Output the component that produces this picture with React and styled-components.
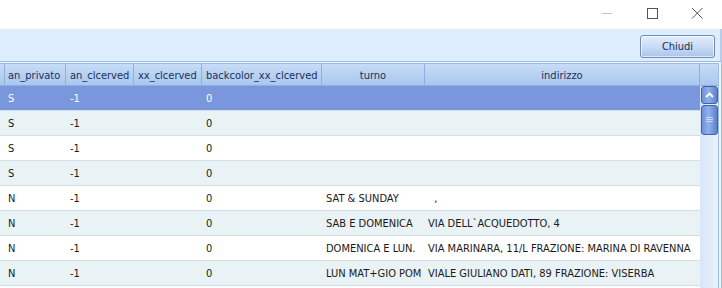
import React from "react";
import styled, { createGlobalStyle } from "styled-components";

const GlobalStyle = createGlobalStyle`
  html, body {
    margin: 0;
    padding: 0;
    background: #ffffff;
  }
  body {
    font-family: "DejaVu Sans Condensed", "DejaVu Sans", sans-serif;
    font-stretch: semi-condensed;
    font-size: 11px;
  }
`;

const COLUMNS = "4px 62px 68px 68px 120px 103px 275px";

const Window = styled.div`
  width: 722px;
  height: 288px;
  overflow: hidden;
  display: flex;
  flex-direction: column;
  background: #ffffff;
`;

const TitleBar = styled.div`
  height: 29px;
  flex-shrink: 0;
  display: flex;
  justify-content: flex-end;
  align-items: flex-start;
  padding-right: 3px;
`;

const CtrlButton = styled.div`
  width: 45px;
  height: 26px;
  display: flex;
  align-items: center;
  justify-content: center;
`;

const Toolbar = styled.div`
  height: 32px;
  flex-shrink: 0;
  display: flex;
  justify-content: flex-end;
  align-items: flex-start;
  padding: 6px 5px 0 0;
  box-sizing: border-box;
  background: #dfeefc;
  border-right: 2px solid #b7cde8;
`;

const CloseButton = styled.button`
  width: 75px;
  height: 23px;
  padding: 0;
  border: 1px solid #6f8db8;
  border-radius: 3px;
  background: linear-gradient(#e3eefb 0%, #c9dcf4 50%, #aac5eb 100%);
  box-shadow: inset 0 0 0 1px rgba(255, 255, 255, 0.6);
  font-family: inherit;
  font-size: 11px;
  color: #1b2b55;
`;

const GridFrame = styled.div`
  flex: 1;
  display: flex;
  flex-direction: column;
  border-top: 1px solid #9fbde4;
  border-right: 1px solid #9fbde4;
  padding-top: 1px;
  padding-right: 2px;
  background: #eef4fb;
  min-height: 0;
`;

const Grid = styled.div`
  flex: 1;
  display: flex;
  flex-direction: column;
  border-top: 1px solid #9fbde4;
  border-right: 1px solid #9fbde4;
  min-height: 0;
`;

const HeaderRow = styled.div`
  display: grid;
  grid-template-columns: ${COLUMNS} 1fr;
  height: 21px;
  flex-shrink: 0;
  background: linear-gradient(#c7dcf6, #a9c7ee);
  border-bottom: 1px solid #8fb0dc;
`;

const HeaderCell = styled.div`
  display: flex;
  align-items: center;
  justify-content: ${(p) => (p.$center ? "center" : "flex-start")};
  padding-left: ${(p) => (p.$center ? 0 : 4)}px;
  padding-top: 1px;
  border-right: ${(p) => (p.$last ? "none" : "1px solid #8fb0dc")};
  color: #1c2f5c;
  white-space: nowrap;
  overflow: hidden;
`;

const Body = styled.div`
  flex: 1;
  display: flex;
  min-height: 0;
`;

const Rows = styled.div`
  width: 700px;
  flex-shrink: 0;
  display: flex;
  flex-direction: column;
`;

const Row = styled.div`
  display: grid;
  grid-template-columns: ${COLUMNS};
  height: 24px;
  flex-shrink: 0;
  border-bottom: 1px solid #d2deea;
  background: ${(p) =>
    p.$selected ? "#7a97dd" : p.$alt ? "#e9f2f5" : "#ffffff"};
  color: ${(p) => (p.$selected ? "#ffffff" : "#1a1a1a")};
`;

const Cell = styled.div`
  display: flex;
  align-items: center;
  padding-left: ${(p) => p.$pad ?? 4}px;
  padding-top: 1px;
  white-space: pre;
  overflow: hidden;
`;

const ScrollBar = styled.div`
  flex: 1;
  display: flex;
  flex-direction: column;
  align-items: center;
  background: linear-gradient(90deg, #d8e6f8, #eaf2fc);
`;

const ScrollBtn = styled.div`
  width: 17px;
  height: ${(p) => p.$h}px;
  margin-bottom: 1px;
  box-sizing: border-box;
  border: 1px solid #3f62a6;
  border-radius: 3px;
  background: linear-gradient(90deg, #6f93da, #8fb0ec 45%, #5c80cc);
  display: flex;
  align-items: center;
  justify-content: center;
`;

const columns = [
  { label: "" },
  { label: "an_privato" },
  { label: "an_clcerved" },
  { label: "xx_clcerved" },
  { label: "backcolor_xx_clcerved" },
  { label: "turno", center: true },
  { label: "indirizzo", center: true },
  { label: "", last: true },
];

const rows = [
  ["S", "-1", "", "0", "", ""],
  ["S", "-1", "", "0", "", ""],
  ["S", "-1", "", "0", "", ""],
  ["S", "-1", "", "0", "", ""],
  ["N", "-1", "", "0", "SAT & SUNDAY", "  ,"],
  ["N", "-1", "", "0", "SAB E DOMENICA", "VIA DELL`ACQUEDOTTO, 4"],
  ["N", "-1", "", "0", "DOMENICA E LUN.", "VIA MARINARA, 11/L FRAZIONE: MARINA DI RAVENNA"],
  ["N", "-1", "", "0", "LUN MAT+GIO POM", "VIALE GIULIANO DATI, 89 FRAZIONE: VISERBA"],
  ["", "", "", "", "", ""],
];

export default function App() {
  return (
    <Window>
      <GlobalStyle />
      <TitleBar>
        <CtrlButton>
          <svg width="12" height="12" viewBox="0 0 12 12">
            <path d="M1 6.5h10" stroke="#c4c4c4" strokeWidth="1" />
          </svg>
        </CtrlButton>
        <CtrlButton>
          <svg width="12" height="12" viewBox="0 0 12 12">
            <rect x="1.5" y="1.5" width="10" height="10" fill="none" stroke="#555" />
          </svg>
        </CtrlButton>
        <CtrlButton>
          <svg width="12" height="12" viewBox="0 0 12 12">
            <path d="M1 1l10.5 10.5M11.5 1L1 11.5" stroke="#555" strokeWidth="1" />
          </svg>
        </CtrlButton>
      </TitleBar>
      <Toolbar>
        <CloseButton>Chiudi</CloseButton>
      </Toolbar>
      <GridFrame>
        <Grid>
          <HeaderRow>
            {columns.map((c, i) => (
              <HeaderCell key={i} $center={c.center} $last={c.last}>
                {c.label}
              </HeaderCell>
            ))}
          </HeaderRow>
          <Body>
            <Rows>
              {rows.map((r, i) => (
                <Row key={i} $selected={i === 0} $alt={i % 2 === 1}>
                  <Cell />
                  {r.map((v, j) => (
                    <Cell key={j} $pad={j === 5 ? 3 : 4}>
                      {v}
                    </Cell>
                  ))}
                </Row>
              ))}
            </Rows>
            <ScrollBar>
              <ScrollBtn $h={18}>
                <svg width="9" height="6" viewBox="0 0 9 6">
                  <path d="M1 5l3.5-3.5L8 5" stroke="#ffffff" strokeWidth="1.8" fill="none" />
                </svg>
              </ScrollBtn>
              <ScrollBtn $h={30}>
                <svg width="7" height="6" viewBox="0 0 7 6">
                  <path d="M0 0.5h7M0 2.5h7M0 4.5h7" stroke="#c9d8f3" strokeWidth="1" />
                </svg>
              </ScrollBtn>
            </ScrollBar>
          </Body>
        </Grid>
      </GridFrame>
    </Window>
  );
}
